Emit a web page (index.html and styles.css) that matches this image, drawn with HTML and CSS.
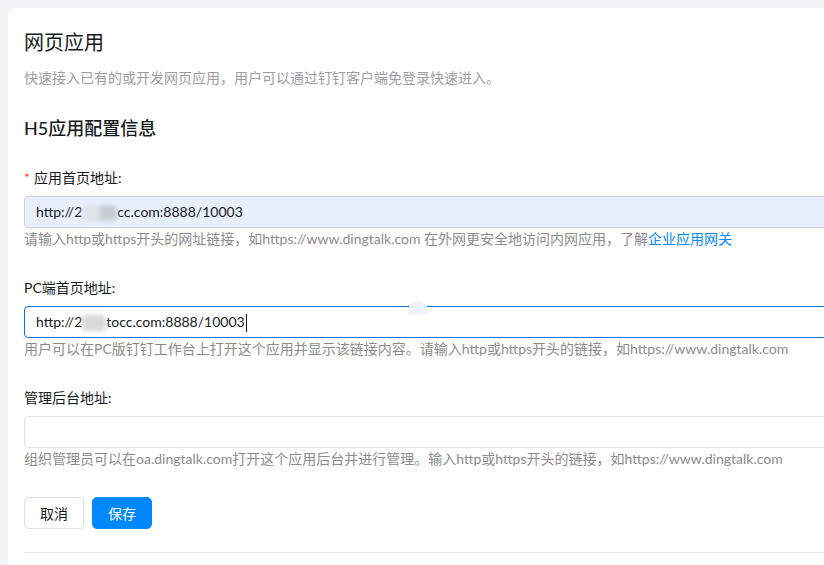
FILE: index.html
```html
<!DOCTYPE html>
<html lang="zh-CN">

<head>
    <meta charset="UTF-8">
    <meta name="viewport" content="width=device-width, initial-scale=1.0">
    <title>网页应用</title>
    <link rel="stylesheet" href="styles.css">
</head>

<body>
    <!-- 白色卡片 -->
    <div class="card">
        <h1 class="title">网页应用</h1>
        <p class="desc">快速接入已有的或开发网页应用，用户可以通过钉钉客户端免登录快速进入。</p>

        <h2 class="sub-title">H5应用配置信息</h2>

        <div class="form-item">
            <div class="label"><span class="required">*</span>应用首页地址:</div>
            <div class="field autofill">http://2<span class="mask mask-a"></span>cc.com:8888/10003</div>
            <div class="help">请输入http或https开头的网址链接，如https://www.dingtalk.com 在外网更安全地访问内网应用，了解<a class="link" href="#">企业应用网关</a></div>
        </div>

        <div class="form-item">
            <div class="label">PC端首页地址:</div>
            <div class="field focus">http://2<span class="mask mask-b"></span>tocc.com:8888/10003<span class="caret"></span>
                <span class="bubble"></span>
            </div>
            <div class="help">用户可以在PC版钉钉工作台上打开这个应用并显示该链接内容。请输入http或https开头的链接，如https://www.dingtalk.com</div>
        </div>

        <div class="form-item">
            <div class="label">管理后台地址:</div>
            <div class="field"></div>
            <div class="help">组织管理员可以在oa.dingtalk.com打开这个应用后台并进行管理。输入http或https开头的链接，如https://www.dingtalk.com</div>
        </div>

        <div class="actions">
            <button type="button" class="btn">取消</button>
            <button type="button" class="btn btn-primary">保存</button>
        </div>

        <div class="divider"></div>
    </div>
</body>

</html>
```

FILE: styles.css
```css
* {
    margin: 0;
    padding: 0;
    box-sizing: border-box;
}

body {
    background-color: #f2f3f5;
    font-family: Lato, "Noto Sans CJK SC", sans-serif;
    color: #171a1d;
    overflow: hidden;
    height: 565px;
}

.card {
    width: 920px;
    margin: 8px 0 0 8px;
    padding: 20px 0 40px 16px;
    background-color: #fff;
    border-radius: 8px 0 0 0;
}

.title {
    font-size: 20px;
    line-height: 28px;
    font-weight: 400;
}

.desc {
    margin-top: 11px;
    font-size: 14px;
    line-height: 22px;
    color: #9d9d9f;
}

.sub-title {
    margin-top: 26px;
    font-size: 18px;
    line-height: 26px;
    font-weight: 500;
}

.form-item {
    margin-top: 27px;
}

.form-item + .form-item {
    margin-top: 28px;
}

.label {
    font-size: 14px;
    line-height: 20px;
    margin-bottom: 8px;
}

.required {
    color: #ff5219;
    margin-right: 4px;
}

/* 输入框 */
.field {
    position: relative;
    height: 32px;
    border: 1px solid #e0e0e0;
    border-radius: 4px;
    padding: 0 11px;
    font-size: 14px;
    line-height: 30px;
    white-space: nowrap;
}

.field.autofill {
    background-color: #e8f0fe;
    border-color: #c9d0dc;
}

.field.focus {
    border-color: #0a74e8;
}

/* 打码的部分 */
.mask {
    display: inline-block;
    height: 16px;
    vertical-align: middle;
    filter: blur(2px);
    border-radius: 4px;
}

.mask-a {
    width: 35px;
    background: linear-gradient(to right, #dfe3ea 0%, #dfe3ea 45%, #c8ccd4 55%, #c8ccd4 100%);
}

.mask-b {
    width: 24px;
    background-color: #d9d9d9;
}

.caret {
    display: inline-block;
    width: 1px;
    height: 18px;
    margin-left: 1px;
    vertical-align: middle;
    background-color: #111;
}

.bubble {
    position: absolute;
    left: 383px;
    top: -6px;
    width: 20px;
    height: 14px;
    border-radius: 10px 10px 0 0;
    background-color: #edf4fd;
}

.help {
    font-size: 14px;
    line-height: 22px;
    color: #8c8c8c;
    white-space: nowrap;
}

.link {
    color: #0089ff;
    text-decoration: none;
}

.actions {
    display: flex;
    gap: 8px;
    margin-top: 27px;
}

.btn {
    width: 60px;
    height: 32px;
    border: 1px solid #e0e0e0;
    border-radius: 5px;
    background-color: #fff;
    font-family: inherit;
    font-size: 14px;
    color: #171a1d;
    cursor: pointer;
}

.btn-primary {
    border-color: #0089ff;
    background-color: #0089ff;
    color: #fff;
}

.divider {
    margin-top: 23px;
    height: 1px;
    background-color: #e6e6e6;
}
```
